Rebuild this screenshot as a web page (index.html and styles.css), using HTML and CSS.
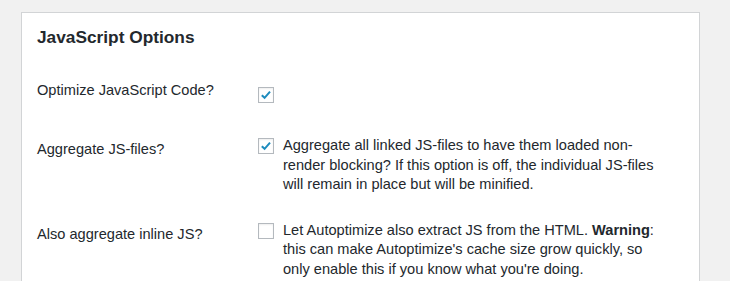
FILE: index.html
```html
<!DOCTYPE html>
<html lang="en">
<head>
  <meta charset="UTF-8">
  <title>JavaScript Options</title>
  <link rel="stylesheet" href="styles.css">
</head>
<body>
  <div class="postbox">
    <h2 class="box-title">JavaScript Options</h2>

    <div class="form-row form-row-single">
      <div class="row-label">Optimize JavaScript Code?</div>
      <div class="row-field">
        <span class="check is-checked">
          <svg viewBox="0 0 16 16" width="14" height="14"><path d="M3.2 8.2 L6.4 11.2 L12.6 4.2" fill="none" stroke="#1e8cbe" stroke-width="2.3"/></svg>
        </span>
      </div>
    </div>

    <div class="form-row">
      <div class="row-label">Aggregate JS-files?</div>
      <div class="row-field">
        <span class="check is-checked">
          <svg viewBox="0 0 16 16" width="14" height="14"><path d="M3.2 8.2 L6.4 11.2 L12.6 4.2" fill="none" stroke="#1e8cbe" stroke-width="2.3"/></svg>
        </span>
        <p class="field-desc">Aggregate all linked JS-files to have them loaded non-render blocking? If this option is off, the individual JS-files will remain in place but will be minified.</p>
      </div>
    </div>

    <div class="form-row">
      <div class="row-label">Also aggregate inline JS?</div>
      <div class="row-field">
        <span class="check"></span>
        <p class="field-desc">Let Autoptimize also extract JS from the HTML. <strong>Warning</strong>: this can make Autoptimize's cache size grow quickly, so only enable this if you know what you're doing.</p>
      </div>
    </div>
  </div>
</body>
</html>
```

FILE: styles.css
```css
body {
  margin: 0;
  background-color: #f1f1f1;
  font-family: "Liberation Sans", Arial, sans-serif;
  font-size: 14.6px;
  line-height: 19.5px;
  color: #23282d;
  overflow: hidden;
}

.postbox {
  margin: 12px 30px 0 21px;
  padding: 12px 15px 20px;
  background-color: #fff;
  border: 1px solid #d2d4d6;
  min-height: 300px;
}

.box-title {
  margin: 0 0 15px;
  font-size: 17.3px;
  line-height: 24px;
  font-weight: bold;
}

.form-row {
  display: flex;
  align-items: flex-start;
  padding: 13px 0;
}

.row-label {
  width: 221px;
  flex-shrink: 0;
  padding-top: 4px;
}

.row-field {
  display: flex;
  align-items: flex-start;
  gap: 9px;
}

.form-row-single {
  min-height: 33px;
}

.form-row-single .check {
  margin-top: 10px;
}

.check {
  width: 16px;
  height: 16px;
  box-sizing: border-box;
  flex-shrink: 0;
  margin-top: 2px;
  border: 1px solid #b4b9be;
  background-color: #fff;
  box-shadow: inset 0 1px 2px rgba(0, 0, 0, 0.07);
  display: flex;
  align-items: center;
  justify-content: center;
}

.field-desc {
  margin: 0;
  width: 385px;
}

.field-desc strong {
  font-weight: bold;
}
```
